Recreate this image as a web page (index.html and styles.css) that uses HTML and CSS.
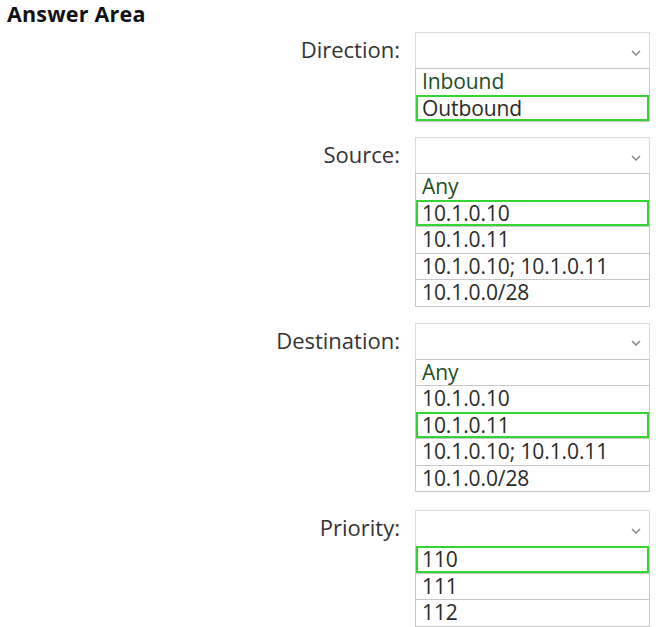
FILE: index.html
```html
<!DOCTYPE html>
<html>
<head>
<meta charset="utf-8">
<link rel="stylesheet" href="styles.css">
</head>
<body>
<div class="page">
  <div class="title">Answer Area</div>
  <div class="form">
    <div class="group">
      <div class="label">Direction:</div>
      <div class="control">
        <div class="select"><svg class="chev" width="10" height="6" viewBox="0 0 10 6"><path d="M1 1 L5 5 L9 1" fill="none" stroke="#888" stroke-width="1.5"/></svg></div>
        <ul class="options">
          <li class="first">Inbound</li>
          <li class="selected">Outbound</li>
        </ul>
      </div>
    </div>
    <div class="group">
      <div class="label">Source:</div>
      <div class="control">
        <div class="select"><svg class="chev" width="10" height="6" viewBox="0 0 10 6"><path d="M1 1 L5 5 L9 1" fill="none" stroke="#888" stroke-width="1.5"/></svg></div>
        <ul class="options">
          <li class="first">Any</li>
          <li class="selected">10.1.0.10</li>
          <li>10.1.0.11</li>
          <li>10.1.0.10; 10.1.0.11</li>
          <li>10.1.0.0/28</li>
        </ul>
      </div>
    </div>
    <div class="group">
      <div class="label">Destination:</div>
      <div class="control">
        <div class="select"><svg class="chev" width="10" height="6" viewBox="0 0 10 6"><path d="M1 1 L5 5 L9 1" fill="none" stroke="#888" stroke-width="1.5"/></svg></div>
        <ul class="options">
          <li class="first">Any</li>
          <li>10.1.0.10</li>
          <li class="selected">10.1.0.11</li>
          <li>10.1.0.10; 10.1.0.11</li>
          <li>10.1.0.0/28</li>
        </ul>
      </div>
    </div>
    <div class="group">
      <div class="label">Priority:</div>
      <div class="control">
        <div class="select"><svg class="chev" width="10" height="6" viewBox="0 0 10 6"><path d="M1 1 L5 5 L9 1" fill="none" stroke="#888" stroke-width="1.5"/></svg></div>
        <ul class="options">
          <li class="selected">110</li>
          <li>111</li>
          <li>112</li>
        </ul>
      </div>
    </div>
  </div>
</div>
</body>
</html>
```

FILE: styles.css
```css
html, body {
  margin: 0;
  padding: 0;
  background: #fff;
}
body {
  font-family: "Open Sans", "Noto Sans", sans-serif;
  color: #222;
}
.page {
  padding: 1px 0 0 7px;
}
.title {
  font-weight: 700;
  font-size: 21.5px;
  line-height: 25px;
  color: #111;
  letter-spacing: 0.2px;
}
.form {
  display: flex;
  flex-direction: column;
  gap: 16px;
  margin-top: 6px;
}
.form .group:first-child {
  margin-bottom: -1px;
}
.form .group:last-child {
  margin-top: 2px;
}
.group {
  display: grid;
  grid-template-columns: 393px 235px;
  column-gap: 15px;
  align-items: start;
}
.label {
  height: 34px;
  display: flex;
  align-items: center;
  justify-content: flex-end;
  font-size: 22px;
  color: #333;
}
.control {
  display: flex;
  flex-direction: column;
}
.select {
  height: 35px;
  border: 1px solid #dcdcdc;
  border-bottom: none;
  display: flex;
  align-items: center;
  justify-content: flex-end;
  padding-right: 8px;
}
.chev {
  margin-top: 4px;
}
.options {
  list-style: none;
  margin: 0;
  padding: 0;
  border-left: 1px solid #c8c8c8;
  border-right: 1px solid #c8c8c8;
  border-bottom: 1px solid #c8c8c8;
}
.options li {
  height: 25.5px;
  line-height: 25.5px;
  font-size: 21px;
  padding-left: 6px;
  border-top: 1px solid #c8c8c8;
  color: #2a2a2a;
  letter-spacing: -0.1px;
}
.options li.first {
  color: #1f4f1f;
}
.options li.selected {
  outline: 2px solid #33d433;
  outline-offset: -2px;
}
```
